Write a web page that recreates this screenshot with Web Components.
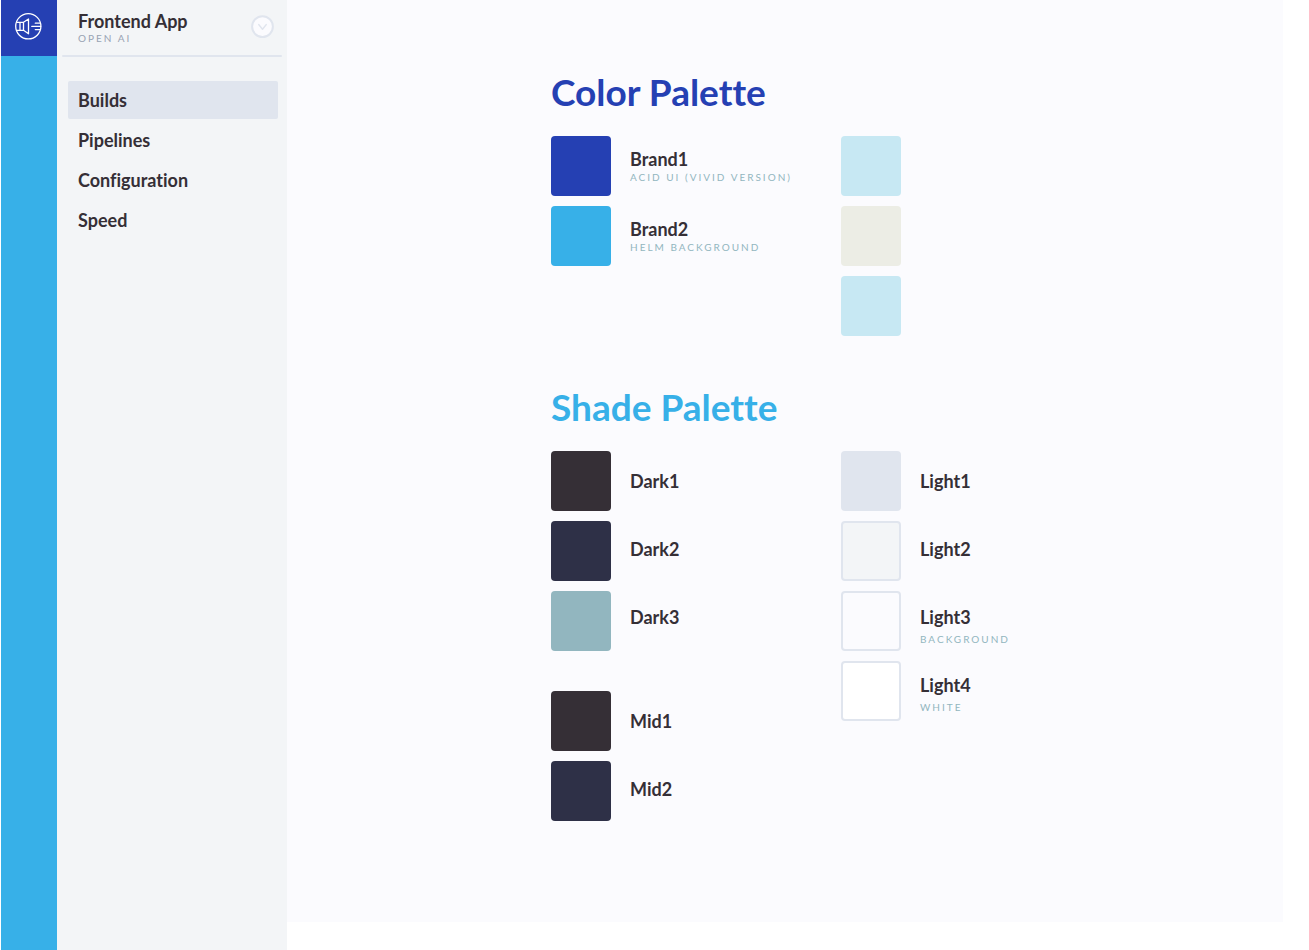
<!DOCTYPE html>
<html lang="en">
<head>
<meta charset="utf-8">
<title>Frontend App</title>
<style>
  body {
    --brand1: #2540b3;
    --brand2: #37b0e8;
    --dark1: #352f36;
    --dark2: #2e3047;
    --dark3: #92b6bf;
    --light1: #e0e5ee;
    --light2: #f3f5f7;
    --light3: #fbfbfe;
    margin: 0;
    background: #fff;
    color: var(--dark1);
    font-family: Lato, "Open Sans", sans-serif;
    font-size: 18px;
    font-weight: 700;
    font-variant-ligatures: none;
    line-height: 24px;
  }
</style>
</head>
<body>
<app-shell>
  <app-rail slot="rail"></app-rail>
  <app-sidebar slot="sidebar">
    <span slot="title">Frontend App</span>
    <span slot="org">OPEN AI</span>
    <nav-item active>Builds</nav-item>
    <nav-item>Pipelines</nav-item>
    <nav-item>Configuration</nav-item>
    <nav-item>Speed</nav-item>
  </app-sidebar>

  <palette-section>
    <span slot="title">Color Palette</span>
    <swatch-group slot="start" compact>
      <color-swatch color="#2540b3"></color-swatch>
      <color-swatch color="#37b0e8"></color-swatch>
      <swatch-label slot="label" compact>Brand1<span slot="note">ACID UI (VIVID VERSION)</span></swatch-label>
      <swatch-label slot="label" compact>Brand2<span slot="note">HELM BACKGROUND</span></swatch-label>
    </swatch-group>
    <swatch-group slot="end">
      <color-swatch color="#c7e8f3"></color-swatch>
      <color-swatch color="#ecede5"></color-swatch>
      <color-swatch color="#c7e8f3"></color-swatch>
    </swatch-group>
  </palette-section>

  <palette-section tone="bright">
    <span slot="title">Shade Palette</span>
    <swatch-group slot="start">
      <color-swatch color="#352f36"></color-swatch>
      <color-swatch color="#2e3047"></color-swatch>
      <color-swatch color="#92b6bf"></color-swatch>
      <swatch-label slot="label">Dark1</swatch-label>
      <swatch-label slot="label">Dark2</swatch-label>
      <swatch-label slot="label">Dark3</swatch-label>
    </swatch-group>
    <swatch-group slot="start">
      <color-swatch color="#352f36"></color-swatch>
      <color-swatch color="#2e3047"></color-swatch>
      <swatch-label slot="label">Mid1</swatch-label>
      <swatch-label slot="label">Mid2</swatch-label>
    </swatch-group>
    <swatch-group slot="end">
      <color-swatch color="#e0e5ee"></color-swatch>
      <color-swatch color="#f3f5f7" outlined></color-swatch>
      <color-swatch color="#fbfbfe" outlined></color-swatch>
      <color-swatch color="#ffffff" outlined></color-swatch>
      <swatch-label slot="label">Light1</swatch-label>
      <swatch-label slot="label">Light2</swatch-label>
      <swatch-label slot="label">Light3<span slot="note">BACKGROUND</span></swatch-label>
      <swatch-label slot="label">Light4<span slot="note">WHITE</span></swatch-label>
    </swatch-group>
  </palette-section>
</app-shell>

<script>
  const define = (name, html, setup) => {
    const template = document.createElement('template');
    template.innerHTML = html;
    customElements.define(name, class extends HTMLElement {
      constructor() {
        super();
        this.attachShadow({ mode: 'open' }).append(template.content.cloneNode(true));
      }
      connectedCallback() {
        if (setup) setup(this);
      }
    });
  };

  define('app-shell', `
    <style>
      :host {
        display: grid;
        grid-template-columns: 56px 230px 1fr;
        min-height: 100vh;
        padding-left: 1px;
        box-sizing: border-box;
      }
      main {
        display: flex;
        flex-direction: column;
        align-items: center;
        gap: 47px;
        margin: 0 26px 28px 0;
        padding: 68px 24px 48px;
        background: var(--light3);
      }
    </style>
    <slot name="rail"></slot>
    <slot name="sidebar"></slot>
    <main><slot></slot></main>
  `);

  define('app-rail', `
    <style>
      :host { display: block; background: var(--brand2); }
      a {
        display: flex;
        align-items: center;
        justify-content: center;
        height: 56px;
        padding: 0 2px 4px 0;
        box-sizing: border-box;
        background: var(--brand1);
      }
      svg { display: block; }
    </style>
    <a href="#" aria-label="Home">
      <svg width="28" height="28" viewBox="0 0 28 28" fill="none" stroke="#fff" stroke-width="1.3" stroke-linecap="round" stroke-linejoin="round">
        <circle cx="14.3" cy="14.3" r="12.6"/>
        <path d="M2.6 10.3H9.5L14.5 7V21.8L9.5 18.3H2.6M6 10.3V18.3M9.5 10.3V18.3"/>
        <path d="M21.3 11.2H26M17.8 14.4H26.6M21.3 17.6H26"/>
      </svg>
    </a>
  `);

  define('app-sidebar', `
    <style>
      :host { display: block; background: var(--light2); }
      header {
        display: flex;
        align-items: flex-start;
        justify-content: space-between;
        height: 57px;
        margin: 0 5px;
        padding: 9px 8px 0 16px;
        box-sizing: border-box;
        position: relative;
      }
      header::after {
        content: "";
        position: absolute;
        inset: auto 0 0 0;
        height: 2px;
        border-radius: 1px;
        background: var(--light1);
      }
      h1 { margin: 0; font: inherit; }
      p {
        margin: 0;
        font-size: 10px;
        font-weight: 400;
        line-height: 10px;
        letter-spacing: 2px;
        color: #98a3b3;
      }
      button {
        display: block;
        width: 24px;
        height: 24px;
        margin: 6px 0 0;
        padding: 0;
        border: 0;
        background: none;
      }
      svg { display: block; }
      nav {
        display: flex;
        flex-direction: column;
        gap: 2px;
        padding: 24px 9px 24px 11px;
      }
    </style>
    <header>
      <div>
        <h1><slot name="title"></slot></h1>
        <p><slot name="org"></slot></p>
      </div>
      <button type="button" aria-label="Switch app">
        <svg width="24" height="24" viewBox="0 0 24 24" fill="none" stroke="#e0e5ee" stroke-width="2" stroke-linecap="round" stroke-linejoin="round">
          <circle cx="12.5" cy="11.6" r="10.4" fill="#fbfbfe"/>
          <path d="M8.8 9.6L12.5 14.2L16.2 9.6" stroke-width="1.5"/>
        </svg>
      </button>
    </header>
    <nav aria-label="Main"><slot></slot></nav>
  `);

  define('nav-item', `
    <style>
      :host { display: block; }
      a {
        display: block;
        padding: 7px 10px;
        border-radius: 2px;
        color: inherit;
        text-decoration: none;
      }
      :host([active]) a { background: var(--light1); }
    </style>
    <a href="#"><slot></slot></a>
  `);

  define('palette-section', `
    <style>
      :host { display: block; width: 100%; max-width: 468px; }
      h2 {
        margin: 0 0 20px;
        font-size: 37px;
        font-weight: 700;
        line-height: 48px;
        color: var(--brand1);
      }
      :host([tone="bright"]) h2 { color: var(--brand2); }
      .columns { display: grid; grid-template-columns: 290px 1fr; }
      .column { display: flex; flex-direction: column; gap: 40px; }
    </style>
    <section>
      <h2><slot name="title"></slot></h2>
      <div class="columns">
        <div class="column"><slot name="start"></slot></div>
        <div class="column"><slot name="end"></slot></div>
      </div>
    </section>
  `);

  define('swatch-group', `
    <style>
      :host { display: flex; gap: 19px; }
      .tiles { display: grid; gap: 10px; align-content: start; }
      .labels {
        display: grid;
        grid-auto-rows: 44px;
        gap: 24px;
        align-content: start;
        padding-top: 18px;
      }
      :host([compact]) .labels { gap: 26px; padding-top: 11px; }
    </style>
    <div class="tiles"><slot></slot></div>
    <div class="labels"><slot name="label"></slot></div>
  `);

  define('color-swatch', `
    <style>
      :host {
        display: block;
        width: 60px;
        height: 60px;
        box-sizing: border-box;
        border-radius: 4px;
      }
      :host([outlined]) { border: 2px solid var(--light1); }
    </style>
  `, el => { el.style.backgroundColor = el.getAttribute('color'); });

  define('swatch-label', `
    <style>
      :host { display: block; white-space: nowrap; }
      .note {
        font-size: 10px;
        font-weight: 400;
        line-height: 20px;
        letter-spacing: 2px;
        color: var(--dark3);
      }
      :host([compact]) .note { line-height: 12px; }
    </style>
    <div><slot></slot></div>
    <div class="note"><slot name="note"></slot></div>
  `);
</script>
</body>
</html>
